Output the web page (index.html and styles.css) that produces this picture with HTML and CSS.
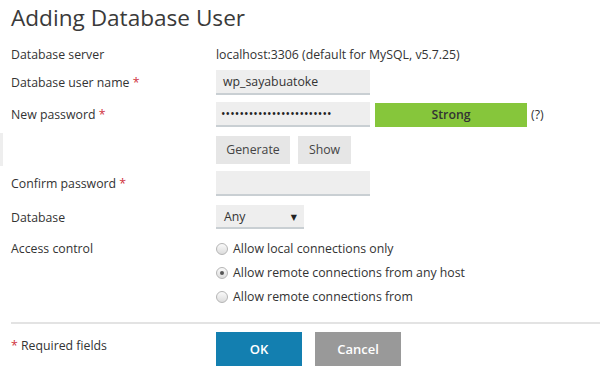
FILE: index.html
```html
<!DOCTYPE html>
<html>
<head>
<meta charset="utf-8">
<link rel="stylesheet" href="styles.css">
</head>
<body>
<div class="edge"></div>
<div class="page">
  <h1 class="title">Adding Database User</h1>
  <div class="form">
    <div class="row r-server">
      <div class="label">Database server</div>
      <div class="value text">localhost:3306 (default for MySQL, v5.7.25)</div>
    </div>
    <div class="row r-user">
      <div class="label">Database user name <span class="req">*</span></div>
      <div class="value"><div class="input">wp_sayabuatoke</div></div>
    </div>
    <div class="row r-pass">
      <div class="label">New password <span class="req">*</span></div>
      <div class="value pass">
        <div class="input dots">&bull;&bull;&bull;&bull;&bull;&bull;&bull;&bull;&bull;&bull;&bull;&bull;&bull;&bull;&bull;&bull;&bull;&bull;&bull;&bull;&bull;&bull;&bull;&bull;</div>
        <div class="strength">Strong</div>
        <div class="help">(?)</div>
      </div>
    </div>
    <div class="row r-btns">
      <div class="label"></div>
      <div class="value btns">
        <div class="btn btn-gen">Generate</div>
        <div class="btn btn-show">Show</div>
      </div>
    </div>
    <div class="row r-confirm">
      <div class="label">Confirm password <span class="req">*</span></div>
      <div class="value"><div class="input"></div></div>
    </div>
    <div class="row r-db">
      <div class="label">Database</div>
      <div class="value"><div class="select"><span>Any</span><span class="arrow">&#9660;</span></div></div>
    </div>
    <div class="row r-access">
      <div class="label">Access control</div>
      <div class="value radios">
        <div class="radio"><span class="dot"></span>Allow local connections only</div>
        <div class="radio"><span class="dot on"></span>Allow remote connections from any host</div>
        <div class="radio"><span class="dot"></span>Allow remote connections from</div>
      </div>
    </div>
  </div>
  <div class="footer">
    <div class="label"><span class="req">*</span> Required fields</div>
    <div class="actions">
      <div class="btn-ok">OK</div>
      <div class="btn-cancel">Cancel</div>
    </div>
  </div>
</div>
</body>
</html>
```
FILE: styles.css
```css
* { box-sizing: border-box; }
html, body { margin: 0; padding: 0; background: #fff; }
body {
  font-family: "Open Sans", "DejaVu Sans", sans-serif;
  font-size: 12.3px;
  color: #333;
  width: 600px;
  height: 387px;
  overflow: hidden;
  position: relative;
}
.edge {
  position: absolute;
  left: 0;
  top: 133px;
  width: 3px;
  height: 33px;
  background: #eeeeee;
}
.page { padding-left: 11px; }
.title {
  margin: 0;
  padding-top: 1px;
  font-size: 22.6px;
  font-weight: 400;
  line-height: 33px;
  color: #3a3a3a;
}
.form { margin-top: 8px; }
.row { display: flex; align-items: center; }
.label { width: 205px; flex: none; }
.req { color: #d0323c; }
.value { display: flex; align-items: center; }
.r-server { height: 24px; }
.r-user { margin-top: 4px; height: 25px; }
.r-pass { margin-top: 7px; height: 25px; }
.r-btns { margin-top: 9px; height: 28px; }
.r-confirm { margin-top: 6px; height: 26px; }
.r-db { margin-top: 9px; height: 24px; }
.r-access { margin-top: 11px; align-items: flex-start; }
.input {
  width: 154px;
  height: 25px;
  background: #eeeeee;
  border-bottom: 2px solid #c9cfd3;
  padding: 0 7px;
  line-height: 24px;
  color: #333;
}
.dots { letter-spacing: 0.1px; font-size: 12px; color: #222; padding-left: 5px; }
.pass { gap: 5px; }
.strength {
  width: 152px;
  height: 24px;
  background: #86c63b;
  color: #333;
  font-weight: 600;
  text-align: center;
  line-height: 24px;
  font-size: 12.3px;
}
.help { margin-left: -1px; }
.btns { gap: 8px; }
.btn {
  height: 28px;
  background: #e6e6e6;
  color: #444;
  line-height: 28px;
  text-align: center;
}
.btn-gen { width: 74px; }
.btn-show { width: 53px; }
.select {
  width: 88px;
  height: 24px;
  background: #eeeeee;
  border-bottom: 2px solid #c9cfd3;
  display: flex;
  justify-content: space-between;
  align-items: center;
  padding: 0 7px 0 8px;
}
.arrow { font-size: 8px; color: #222; }
.radios { flex-direction: column; align-items: flex-start; gap: 5px; margin-top: -1px; }
.radio { display: flex; align-items: center; height: 19px; }
.dot {
  width: 12px;
  height: 12px;
  border-radius: 50%;
  border: 1px solid #b5b5b5;
  background: linear-gradient(#fafafa, #dcdcdc);
  margin-right: 5px;
  position: relative;
}
.dot.on::after {
  content: "";
  position: absolute;
  left: 3px;
  top: 3px;
  width: 4px;
  height: 4px;
  border-radius: 50%;
  background: #555;
}
.footer {
  margin-top: 16px;
  border-top: 2px solid #e3e3e3;
  padding-top: 8px;
  display: flex;
  align-items: flex-start;
}
.footer .label { padding-top: 5px; }
.actions { display: flex; gap: 13px; }
.btn-ok, .btn-cancel {
  width: 86px;
  height: 34px;
  line-height: 34px;
  text-align: center;
  color: #fff;
  font-weight: 600;
  font-size: 13px;
}
.btn-ok { background: #137fb0; }
.btn-cancel { background: #999; }
```
